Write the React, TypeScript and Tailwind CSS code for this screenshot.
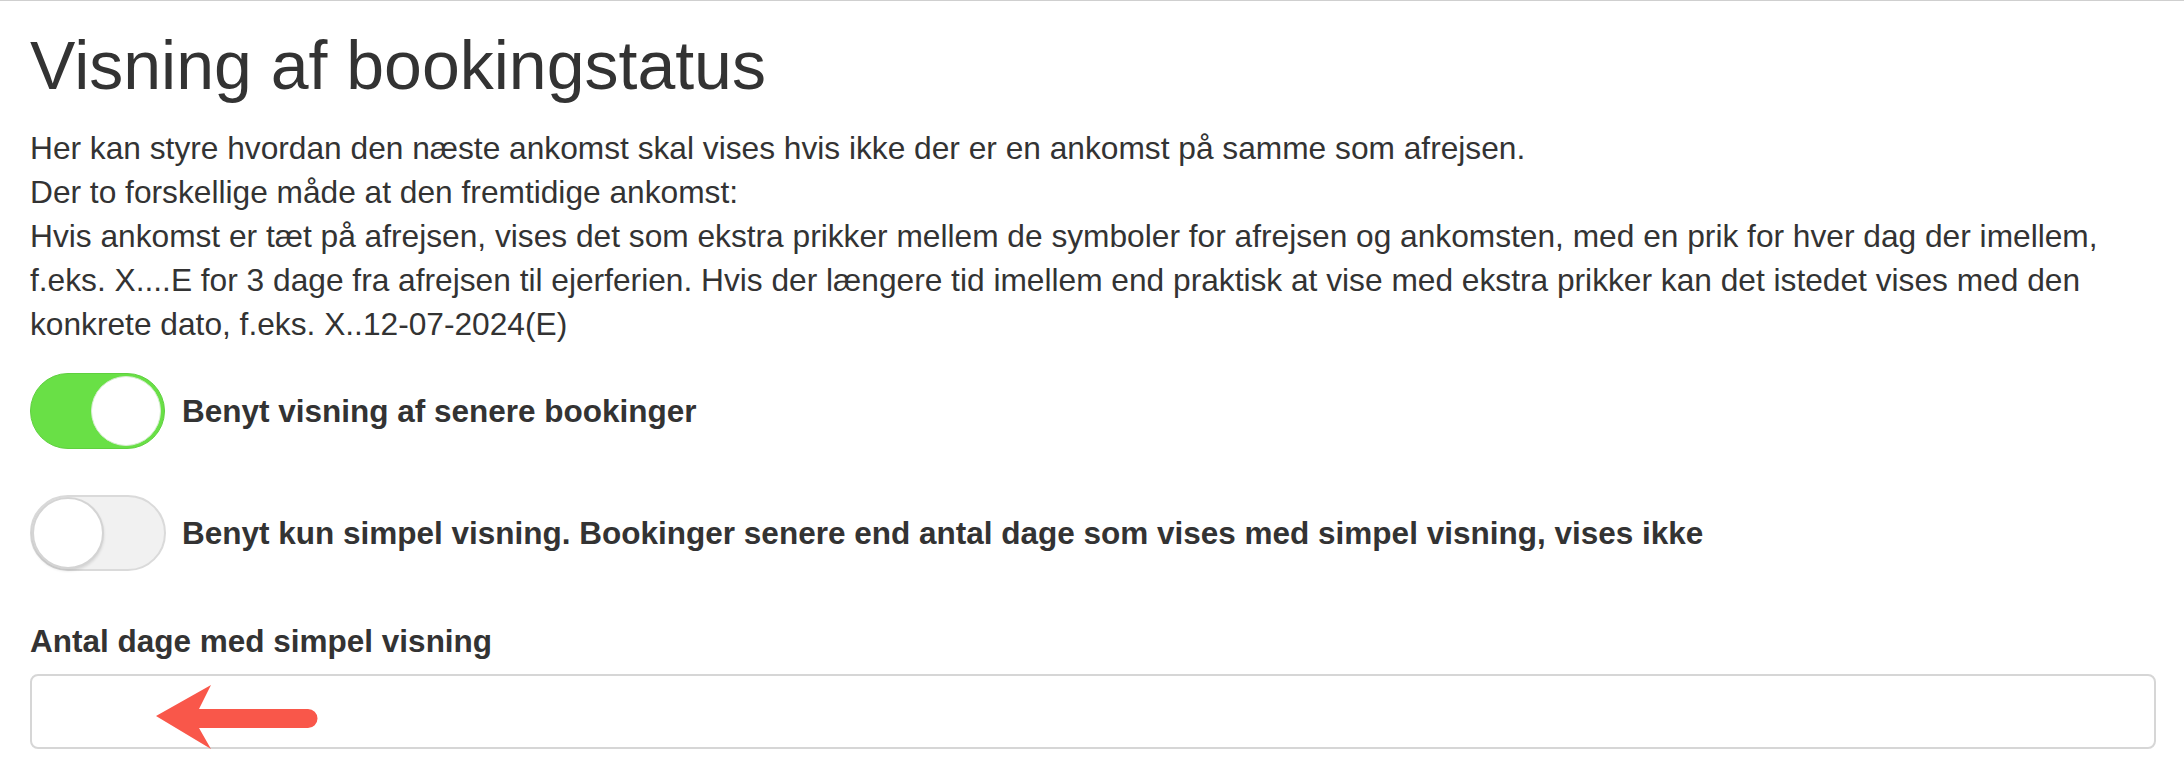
import React from "react";

const Toggle = ({ on }: { on: boolean }) => {
  if (on) {
    return (
      <div className="flex h-[76px] w-[135px] shrink-0 items-center justify-end rounded-full border border-[#5fd03f] bg-[#69e046] pr-[3px]">
        <div className="h-[70px] w-[70px] rounded-full border border-[#d6ecd0] bg-white" />
      </div>
    );
  }
  return (
    <div className="flex h-[76px] w-[136px] shrink-0 items-center rounded-full border-2 border-[#dadada] bg-[#f1f1f1]">
      <div className="h-[72px] w-[72px] rounded-full border-2 border-[#d4d4d4] bg-white shadow-[0_2px_3px_rgba(0,0,0,0.12)]" />
    </div>
  );
};

export default function App() {
  const lines = [
    "Her kan styre hvordan den næste ankomst skal vises hvis ikke der er en ankomst på samme som afrejsen.",
    "Der to forskellige måde at den fremtidige ankomst:",
    "Hvis ankomst er tæt på afrejsen, vises det som ekstra prikker mellem de symboler for afrejsen og ankomsten, med en prik for hver dag der imellem,",
    "f.eks. X....E for 3 dage fra afrejsen til ejerferien. Hvis der længere tid imellem end praktisk at vise med ekstra prikker kan det istedet vises med den",
    "konkrete dato, f.eks. X..12-07-2024(E)",
  ];

  return (
    <div className="min-h-[780px] w-full border-t border-[#cfcfcf] bg-white pl-[30px] pr-[28px] pt-[27px] font-['Liberation_Sans',Arial,sans-serif] text-[#333]">
      <h2 className="text-[68px] leading-[74px] font-normal">Visning af bookingstatus</h2>

      {/* Beskrivelse */}
      <div className="mt-[24px] text-[31.7px] leading-[44px]">
        {lines.map((l) => (
          <div key={l} className="whitespace-nowrap">
            {l}
          </div>
        ))}
      </div>

      {/* Toggles */}
      <div className="mt-[27px] flex items-center gap-[17px]">
        <Toggle on={true} />
        <span className="text-[31.5px] leading-[44px] font-bold">Benyt visning af senere bookinger</span>
      </div>

      <div className="mt-[46px] flex items-center gap-[16px]">
        <Toggle on={false} />
        <span className="text-[31.5px] leading-[44px] font-bold">
          Benyt kun simpel visning. Bookinger senere end antal dage som vises med simpel visning, vises ikke
        </span>
      </div>

      <div className="mt-[48px]">
        <label className="block text-[31.5px] leading-[44px] font-bold">Antal dage med simpel visning</label>
        <div className="relative mt-[11px]">
          <input
            type="text"
            className="block h-[75px] w-full rounded-[8px] border-2 border-[#d6d6d6] bg-white px-[27px] text-[31.5px] outline-none"
          />
          <svg className="pointer-events-none absolute left-0 top-0" width="300" height="76" viewBox="0 0 300 76">
            <path
              d="M126 42 L181 11 L169 35 L278 35 A9.5 9.5 0 0 1 278 54 L169 54 L181 75 Z"
              fill="#f9574a"
            />
          </svg>
        </div>
      </div>
    </div>
  );
}
